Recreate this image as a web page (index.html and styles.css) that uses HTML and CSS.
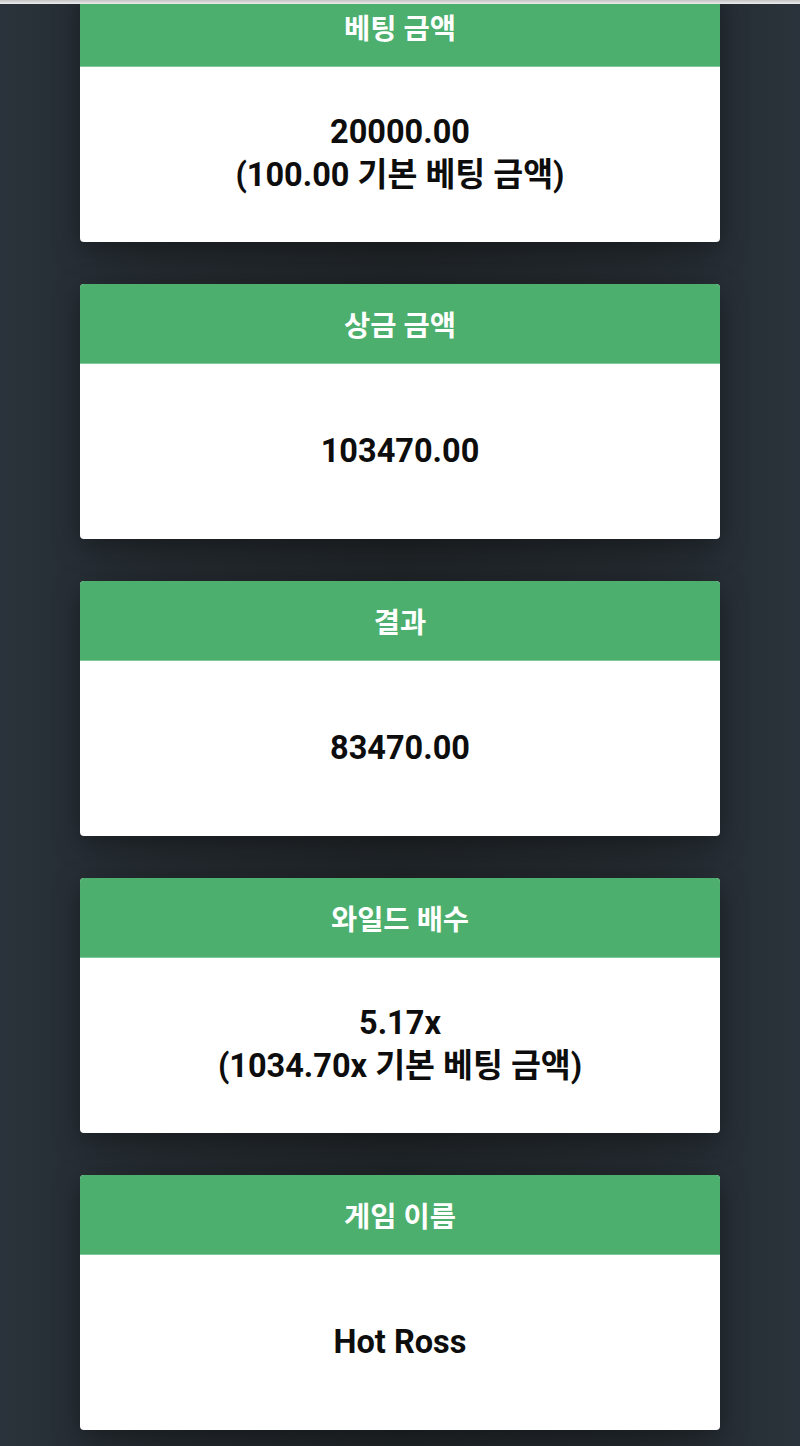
FILE: index.html
```html
<!DOCTYPE html>
<html lang="ko">
<head>
<meta charset="utf-8">
<title>베팅 결과</title>
<link rel="stylesheet" href="styles.css">
</head>
<body>
<div class="topbar"></div>
<div class="viewport">
  <div class="list">
    <section class="card">
      <div class="card-head">베팅 금액</div>
      <div class="card-body">20000.00<br>(100.00 기본 베팅 금액)</div>
    </section>
    <section class="card">
      <div class="card-head">상금 금액</div>
      <div class="card-body">103470.00</div>
    </section>
    <section class="card">
      <div class="card-head">결과</div>
      <div class="card-body">83470.00</div>
    </section>
    <section class="card">
      <div class="card-head">와일드 배수</div>
      <div class="card-body">5.17x<br>(1034.70x 기본 베팅 금액)</div>
    </section>
    <section class="card">
      <div class="card-head">게임 이름</div>
      <div class="card-body">Hot Ross</div>
    </section>
  </div>
</div>
</body>
</html>
```

FILE: styles.css
```css
html, body {
  margin: 0;
  padding: 0;
}
body {
  background: linear-gradient(90deg, #2a333b 0%, #23292e 20%, #1f2428 50%, #23292e 80%, #2a333b 100%);
  font-family: Roboto, "Noto Sans CJK KR", sans-serif;
  height: 1446px;
  overflow: hidden;
}
.topbar {
  height: 4px;
  background: linear-gradient(#c4c4c4, #ececec);
}
.viewport {
  height: 1442px;
  overflow: hidden;
}
.list {
  width: 640px;
  margin: -17.5px auto 0;
  display: flex;
  flex-direction: column;
  gap: 42px;
}
.card {
  border-radius: 4px;
  overflow: hidden;
  background: #fff;
  box-shadow: 0 8px 28px rgba(0, 0, 0, 0.35);
}
.card-head {
  height: 80px;
  background: #4caf6d;
  color: #fff;
  font-weight: 700;
  font-size: 28.5px;
  display: flex;
  align-items: center;
  justify-content: center;
  border-bottom: 1px solid #7fc99a;
  box-sizing: border-box;
}
.card-body {
  height: 175px;
  display: flex;
  align-items: center;
  justify-content: center;
  text-align: center;
  font-weight: 700;
  font-size: 32.5px;
  line-height: 43px;
  color: #0d0d0d;
}
```
